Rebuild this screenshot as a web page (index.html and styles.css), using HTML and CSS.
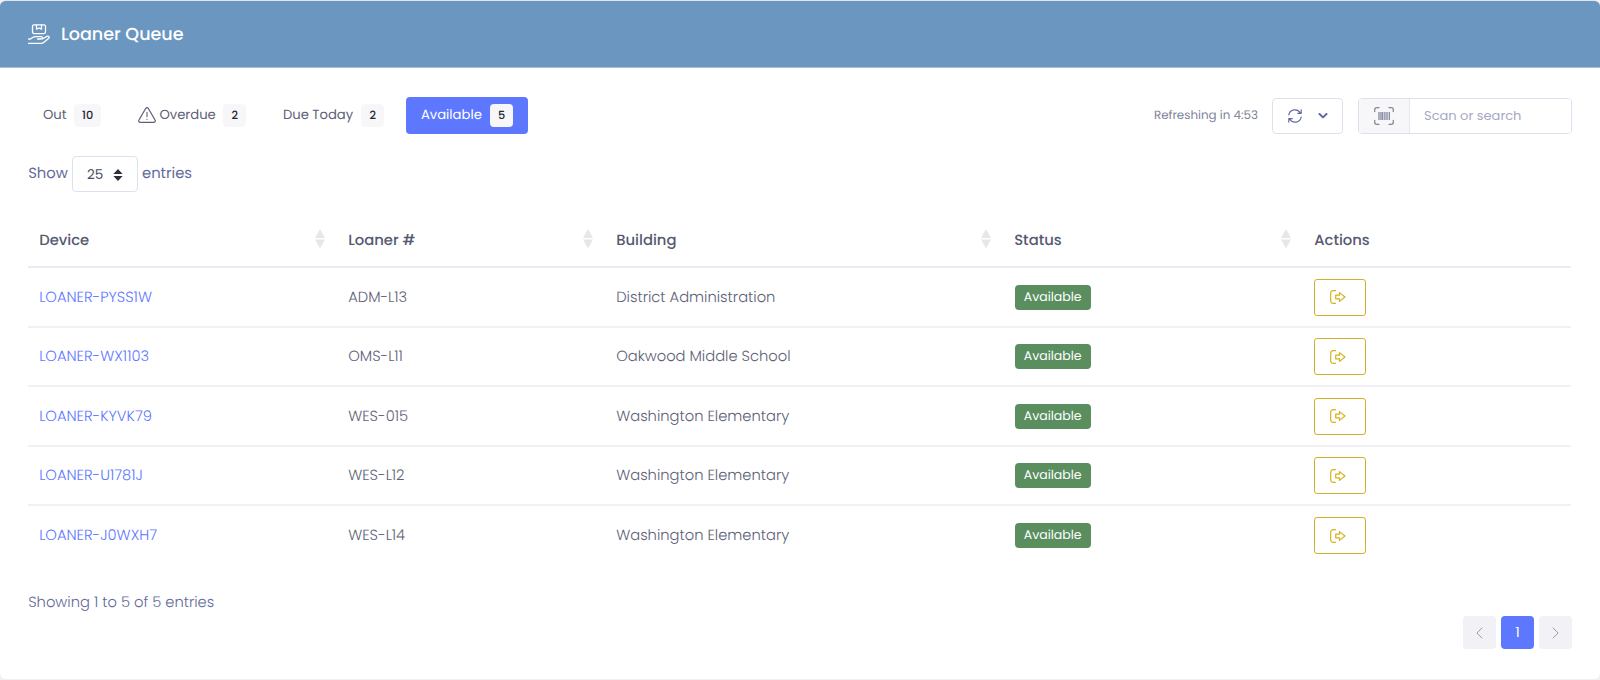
FILE: index.html
```html
<!DOCTYPE html>
<html lang="en">
<head>
<meta charset="utf-8">
<title>Loaner Queue</title>
<link rel="stylesheet" href="styles.css">
</head>
<body>
<svg class="sprite" aria-hidden="true">
  <symbol id="sort" viewBox="0 0 10 20"><path d="M5 0 10 9H0zM0 10.500H10L5 19.500z" fill="#e7e7eb"/></symbol>
  <symbol id="checkout" viewBox="0 0 16 14"><path d="M5.500 .7H3.200A2.500 2.500 0 0 0 .7 3.200V10.800A2.500 2.500 0 0 0 3.200 13.300H5.500M5.700 5.200H9.500V2.600L15 7 9.500 11.400V8.800H5.700z" fill="none" stroke="#d8b11b" stroke-width="1.200" stroke-linejoin="round" stroke-linecap="round"/></symbol>
</svg>
<main class="card">
  <header class="card-header">
    <svg class="logo" width="22" height="21" viewBox="0 0 22 21" fill="none" stroke="#fff" stroke-width="1.300" stroke-linecap="round" stroke-linejoin="round"><rect x="4.500" y=".8" width="13" height="8.800" rx="1.500"/><path d="M8.500 1V5.200L11 4 13.500 5.200V1M.6 15H2.500L5 13.200C6 12.600 7 12.600 8 12.600H13C15 12.600 15 15 13 15H9.500M14.700 14.800 19 12.400C20.700 11.500 22 13.300 20.500 14.600L16 18.200C15 19 14.300 19.400 13 19.400H.6"/></svg>
    <h1>Loaner Queue</h1>
  </header>
  <section class="card-body">
    <div class="toolbar">
      <nav class="tabs">
        <a class="tab tab-out"><span>Out</span><b>10</b></a>
        <a class="tab tab-overdue"><svg width="18" height="16" viewBox="0 0 18 16" fill="none" stroke="#5e6278" stroke-width="1.100" stroke-linecap="round" stroke-linejoin="round"><path d="M7.700 1.400 .9 13.100A1.500 1.500 0 0 0 2.200 15.400H15.800A1.500 1.500 0 0 0 17.100 13.100L10.300 1.400A1.500 1.500 0 0 0 7.700 1.400zM9 5.200V9.800M9 12.200V12.400"/></svg><span>Overdue</span><b>2</b></a>
        <a class="tab tab-due"><span>Due Today</span><b>2</b></a>
        <a class="tab active"><span>Available</span><b>5</b></a>
      </nav>
      <div class="tools">
        <span class="refresh-text">Refreshing in 4:53</span>
        <button class="refresh">
          <svg width="14" height="14" viewBox="0 0 14 14" fill="none" stroke="#6268a3" stroke-width="1.200" stroke-linecap="round" stroke-linejoin="round"><path d="M.8 6A6.200 6.200 0 0 1 12.300 4M13.200 .9V4.300H9.800M13.200 8A6.200 6.200 0 0 1 1.700 10M.8 13.100V9.700H4.200"/></svg>
          <svg width="10" height="6" viewBox="0 0 10 6" fill="none" stroke="#6268a3" stroke-width="2" stroke-linecap="round" stroke-linejoin="round"><path d="M1.500 1 5 4.400 8.500 1"/></svg>
        </button>
        <div class="search">
          <span class="scan"><svg width="20" height="18" viewBox="0 0 20 18" fill="none" stroke="#85889c" stroke-width="1.300" stroke-linecap="round"><path d="M.7 4.500V2.700A2 2 0 0 1 2.700.7H5M15 .7H17.300A2 2 0 0 1 19.300 2.700V4.500M.7 13.500V15.300A2 2 0 0 0 2.700 17.300H5M15 17.300H17.300A2 2 0 0 0 19.300 15.300V13.500"/><path d="M5 5V13M7 5V13M8.700 5V13M10.900 5V13M13 5V13M15.300 5V13" stroke-linecap="butt"/></svg></span>
          <input type="text" placeholder="Scan or search" aria-label="Scan or search">
        </div>
      </div>
    </div>
    <div class="length">
      <span class="label">Show</span>
      <span class="select"><span>25</span><svg width="10" height="12" viewBox="0 0 10 12"><path d="M5 0 9.600 5H.4zM.4 7H9.600L5 12z" fill="#2b303c"/></svg></span>
      <span class="label">entries</span>
    </div>
    <table>
      <colgroup><col class="c1"><col class="c2"><col class="c3"><col class="c4"><col class="c5"></colgroup>
      <thead><tr>
        <th><div><span>Device</span><svg width="10" height="20"><use href="#sort"/></svg></div></th>
        <th><div><span>Loaner #</span><svg width="10" height="20"><use href="#sort"/></svg></div></th>
        <th><div><span>Building</span><svg width="10" height="20"><use href="#sort"/></svg></div></th>
        <th><div><span>Status</span><svg width="10" height="20"><use href="#sort"/></svg></div></th>
        <th><div><span>Actions</span></div></th>
      </tr></thead>
      <tbody>
        <tr class="tall"><td><a>LOANER-PYSS1W</a></td><td>ADM-L13</td><td>District Administration</td><td class="badge-cell"><em>Available</em></td><td class="action-cell"><button class="action"><svg width="16" height="14"><use href="#checkout"/></svg></button></td></tr>
        <tr><td><a>LOANER-WX1103</a></td><td>OMS-L11</td><td>Oakwood Middle School</td><td class="badge-cell"><em>Available</em></td><td class="action-cell"><button class="action"><svg width="16" height="14"><use href="#checkout"/></svg></button></td></tr>
        <tr class="tall"><td><a>LOANER-KYVK79</a></td><td>WES-015</td><td>Washington Elementary</td><td class="badge-cell"><em>Available</em></td><td class="action-cell"><button class="action"><svg width="16" height="14"><use href="#checkout"/></svg></button></td></tr>
        <tr><td><a>LOANER-U1781J</a></td><td>WES-L12</td><td>Washington Elementary</td><td class="badge-cell"><em>Available</em></td><td class="action-cell"><button class="action"><svg width="16" height="14"><use href="#checkout"/></svg></button></td></tr>
        <tr><td><a>LOANER-J0WXH7</a></td><td>WES-L14</td><td>Washington Elementary</td><td class="badge-cell"><em>Available</em></td><td class="action-cell"><button class="action"><svg width="16" height="14"><use href="#checkout"/></svg></button></td></tr>
      </tbody>
    </table>
    <p class="info">Showing 1 to 5 of 5 entries</p>
    <nav class="pages">
      <a><svg width="7" height="12" viewBox="0 0 7 12"><path d="M6.200.7.900 6 6.200 11.300"/></svg></a>
      <a class="current">1</a>
      <a><svg width="7" height="12" viewBox="0 0 7 12"><path d="M.8.7 6.100 6 .8 11.300"/></svg></a>
    </nav>
  </section>
</main>
</body>
</html>
```
FILE: styles.css
```css
* { box-sizing: border-box; }
body { margin: 0; height: 680px; overflow: hidden; background: #f1f1f4; font-family: Poppins, Inter, "Open Sans", sans-serif; color: #5e6278; text-rendering: geometricPrecision; }
.sprite { position: absolute; width: 0; height: 0; }
svg { display: block; flex: none; }
button { font: inherit; cursor: pointer; }
.card { height: 679px; background: #fff; border-top: 1px solid #dde5ef; border-radius: 6px; overflow: hidden; }
.card-header { height: 67px; padding: 0 28px; display: flex; align-items: center; background: #6a96c0; border-bottom: 1px solid #a3bfda; }
.logo { margin-right: 11px; }
h1 { margin: 0; padding-top: 2px; font-size: 17.550px; font-weight: 500; color: #fff; }
.card-body { padding: 28px 28px 0 28.200px; }
.toolbar { display: flex; justify-content: space-between; align-items: center; height: 38px; }
.tabs, .tools { display: flex; align-items: center; }
.tab { display: flex; align-items: center; height: 37px; padding: 0 15px 0 14.700px; font-size: 13.200px; }
.tab b { height: 23px; margin-left: auto; display: grid; place-items: center; width: 23px; background: #f7f7fa; border-radius: 4px; font-size: 11.300px; font-weight: 500; color: #252735; }
.tab span { white-space: nowrap; }
.tab-out { width: 88px; margin-right: 7px; }
.tab-out b { width: 27px; }
.tab-overdue { width: 138px; margin-right: 7px; }
.tab-overdue svg { margin-right: 3.500px; }
.tab-due { width: 131px; margin-right: 7px; }
.active { width: 122px; background: #5d78ff; color: #fff; border-radius: 4px; }
.tools { padding-top: 1px; }
.refresh-text { margin-right: 14px; padding-top: 2px; font-size: 11.900px; color: #7e8299; }
.refresh { width: 71px; height: 36px; margin-right: 15px; padding: 0 14.500px 0 15px; display: flex; align-items: center; justify-content: space-between; background: #fff; border: 1px solid #dfe0ee; border-radius: 4px; }
.search { display: flex; width: 214px; height: 36px; border: 1px solid #dfe0ee; border-radius: 4px; overflow: hidden; }
.scan { width: 51px; display: grid; place-items: center; background: #f7f7fa; border-right: 1px solid #e6e7f0; }
input { width: 161px; border: 0; padding: 0 14px; font: 13px Poppins, Inter, sans-serif; outline: 0; background: #fff; }
input::placeholder { color: #a5a8c5; opacity: 1; }
.length { height: 36px; margin-top: 22px; display: flex; align-items: center; font-size: 14.800px; color: #646b9c; }
.select { width: 66px; height: 36px; margin: 0 4px; padding: 1px 14px 0; display: flex; align-items: center; justify-content: space-between; border: 1px solid #dfe0ee; border-radius: 4px; font-size: 13.500px; color: #4b4f65; }
table { width: 1543px; margin-top: 20px; border-collapse: separate; border-spacing: 0; table-layout: fixed; }
.c1 { width: 309px; }
.c2 { width: 268px; }
.c3 { width: 398px; }
.c4 { width: 300px; }
th { height: 56px; padding: 0 11px; border-bottom: 2px solid #ebebf3; text-align: left; font-size: 14.800px; font-weight: 500; color: #555a70; }
th div { display: flex; align-items: center; justify-content: space-between; }
th span { padding-top: 3px; }
th svg { margin-right: 1px; }
td { height: 59px; padding: 2px 11px 0; border-bottom: 2px solid #f0f0f5; font-size: 14.700px; font-weight: 300; white-space: nowrap; }
.tall td { height: 60px; }
tbody tr:last-child td { border-bottom: 0; }
td.badge-cell { padding-top: 0; padding-left: 11.500px; }
td.action-cell { padding-top: 0; }
td a { color: #5d78ff; }
em { display: flex; width: 76px; height: 25px; padding-top: 1px; align-items: center; justify-content: center; background: #5a8e5f; border-radius: 4px; color: #fff; font-style: normal; font-size: 12.500px; font-weight: 400; }
.action { display: flex; align-items: center; width: 52px; height: 37px; padding: 0 15px; background: #fff; border: 1px solid #d4b02a; border-radius: 3px; }
.info { margin: 27px 0 0; font-size: 14.700px; line-height: 22px; font-weight: 300; color: #646b9c; }
.pages { display: flex; justify-content: flex-end; gap: 5px; margin-top: 2px; }
.pages a { width: 33px; height: 33px; display: grid; place-items: center; background: #f2f2f6; border-radius: 4px; font-size: 14px; color: #fff; }
.pages .current { background: #5d78ff; }
.pages path { fill: none; stroke: #9a9ca9; stroke-width: 1; }
```
